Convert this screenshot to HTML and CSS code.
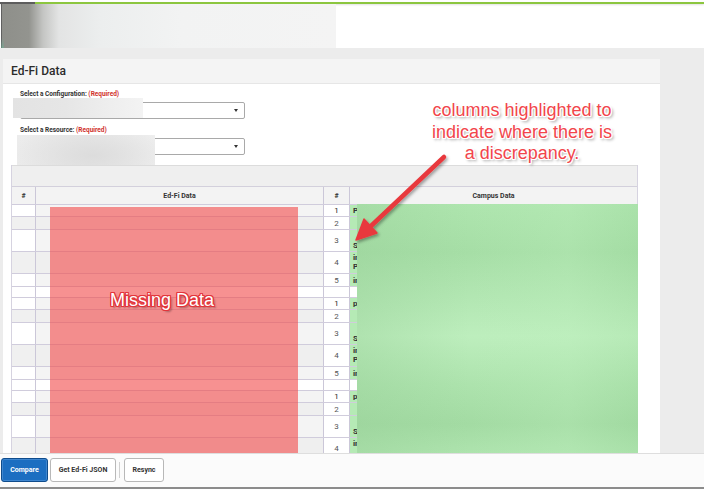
FILE: index.html
```html
<!DOCTYPE html>
<html lang="en">
<head>
<meta charset="utf-8">
<title>Ed-Fi Data</title>
<link rel="stylesheet" href="styles.css">
</head>
<body>
  <header class="app-header">
    <div class="topline"></div>
    <div class="brand"></div>
  </header>

  <main class="workspace">
    <section class="panel">
      <h1 class="panel-title">Ed-Fi Data</h1>
      <div class="panel-body">
        <div class="field">
          <div class="field-label">Select a Configuration: <span class="req">(Required)</span></div>
          <div class="select"><span class="caret"></span></div>
        </div>
        <div class="field">
          <div class="field-label">Select a Resource: <span class="req">(Required)</span></div>
          <div class="select"><span class="caret"></span></div>
        </div>
        <div class="smudge smudge-config"></div>
        <div class="smudge smudge-resource"></div>

        <div class="compare">
          <div class="toolbar"></div>
          <div class="row head">
            <div class="c c1">#</div>
            <div class="c c2">Ed-Fi Data</div>
            <div class="c c3">#</div>
            <div class="c c4">Campus Data</div>
          </div>

          <div class="row r1"><div class="c c1"></div><div class="c c2"></div><div class="c c3 n dark">1</div><div class="c c4 t">Program</div></div>
          <div class="row r2 alt"><div class="c c1"></div><div class="c c2"></div><div class="c c3 n">2</div><div class="c c4 t"></div></div>
          <div class="row r3"><div class="c c1"></div><div class="c c2"></div><div class="c c3 n">3</div><div class="c c4 t bottom">Schedule</div></div>
          <div class="row r4 alt"><div class="c c1"></div><div class="c c2"></div><div class="c c3 n">4</div><div class="c c4 t top">inactive<br>Program</div></div>
          <div class="row r5"><div class="c c1"></div><div class="c c2"></div><div class="c c3 n">5</div><div class="c c4 t">inactive</div></div>
          <div class="row sep"><div class="c c1"></div><div class="c c2"></div><div class="c c3"></div><div class="c c4"></div></div>

          <div class="row r1"><div class="c c1"></div><div class="c c2"></div><div class="c c3 n dark">1</div><div class="c c4 t">program</div></div>
          <div class="row r2 alt"><div class="c c1"></div><div class="c c2"></div><div class="c c3 n">2</div><div class="c c4 t"></div></div>
          <div class="row r3"><div class="c c1"></div><div class="c c2"></div><div class="c c3 n">3</div><div class="c c4 t bottom">Schedule</div></div>
          <div class="row r4 alt"><div class="c c1"></div><div class="c c2"></div><div class="c c3 n">4</div><div class="c c4 t top">inactive<br>Program</div></div>
          <div class="row r5"><div class="c c1"></div><div class="c c2"></div><div class="c c3 n">5</div><div class="c c4 t">inactive</div></div>
          <div class="row sep"><div class="c c1"></div><div class="c c2"></div><div class="c c3"></div><div class="c c4"></div></div>

          <div class="row r1"><div class="c c1"></div><div class="c c2"></div><div class="c c3 n dark">1</div><div class="c c4 t">program</div></div>
          <div class="row r2 alt"><div class="c c1"></div><div class="c c2"></div><div class="c c3 n">2</div><div class="c c4 t"></div></div>
          <div class="row r3"><div class="c c1"></div><div class="c c2"></div><div class="c c3 n">3</div><div class="c c4 t bottom">Schedule</div></div>
          <div class="row r4 alt"><div class="c c1"></div><div class="c c2"></div><div class="c c3 n">4</div><div class="c c4 t top">in</div></div>

          <div class="mask-missing"></div>
          <div class="mask-campus"></div>
        </div>
      </div>
    </section>
  </main>

  <footer class="actions">
    <button class="btn btn-primary">Compare</button>
    <button class="btn btn-json">Get Ed-Fi JSON</button>
    <span class="divider"></span>
    <button class="btn btn-resync">Resync</button>
  </footer>

  <div class="stamp">Missing Data</div>
  <div class="callout">columns highlighted to<br>indicate where there is<br>a discrepancy.</div>
  <svg class="pointer" width="704" height="490" viewBox="0 0 704 490" aria-hidden="true">
    <defs>
      <filter id="drop" x="-20%" y="-20%" width="140%" height="140%">
        <feDropShadow dx="1.5" dy="2" stdDeviation="1.5" flood-color="#000" flood-opacity="0.35"/>
      </filter>
    </defs>
    <g filter="url(#drop)" fill="#e8393d" stroke="#e8393d">
      <line x1="444" y1="157" x2="371" y2="226" stroke-width="4.5" stroke-linecap="round"/>
      <polygon points="356,240 377,233 364,219" stroke-width="1.5" stroke-linejoin="round"/>
    </g>
  </svg>
</body>
</html>
```

FILE: styles.css
```css
* { box-sizing: border-box; }

html, body { margin: 0; padding: 0; }

body {
  width: 704px;
  height: 490px;
  overflow: hidden;
  display: flex;
  flex-direction: column;
  position: relative;
  background: #fff;
  color: #333;
  font-family: Roboto, "Liberation Sans", Arial, sans-serif;
}

/* top application bar */
.app-header {
  height: 48px;
  flex: none;
  background: #fff;
}

.topline {
  height: 2px;
  margin-top: 2px;
  background: linear-gradient(to right, #5d5d5d 0 35px, #8cc63f 35px);
  box-shadow: 0 1px 2px rgba(0, 0, 0, 0.12);
}

.brand {
  width: 335px;
  height: 44px;
  margin-left: 1px;
  background:
    linear-gradient(to top, rgba(110, 175, 150, 0.55) 0, rgba(110, 175, 150, 0) 10px) left / 3px 100% no-repeat,
    linear-gradient(to right, #606060 0 1px, #8e8f8a 1px, #93948f 28px, #c4c5c3 42px, #e3e4e4 58px, #eceeee 100px, #f2f3f3 180px, #f4f4f4 100%);
}

/* work area */
.workspace {
  flex: 1;
  min-height: 0;
  overflow: hidden;
  background: #ececec;
  padding: 11px 0 0 3px;
}

.panel {
  width: 657px;
  min-height: 100%;
  background: #fff;
}

.panel-title {
  margin: 0;
  height: 25px;
  line-height: 25px;
  padding-left: 8px;
  background: #f4f4f4;
  border-bottom: 1px solid #e6e6e6;
  font-size: 12px;
  font-weight: 500;
  color: #2b2b2b;
}

.panel-body {
  position: relative;
  padding: 6px 22px 0 8px;
}

.field { padding-left: 9px; }
.field + .field { margin-top: 7px; }

.field-label {
  height: 9px;
  line-height: 9px;
  margin-bottom: 3px;
  font-size: 6.5px;
  font-weight: 700;
  color: #333;
  white-space: nowrap;
}

.req { color: #d0312d; }

.select {
  width: 225px;
  height: 17px;
  border: 1px solid #a9a9a9;
  border-radius: 2px;
  background: #fff;
  display: flex;
  align-items: center;
  justify-content: flex-end;
  padding-right: 6px;
}

.caret {
  width: 0;
  height: 0;
  border-left: 2.5px solid transparent;
  border-right: 2.5px solid transparent;
  border-top: 3.5px solid #333;
}

/* soft placeholder patches over the selected values */
.smudge { position: absolute; }

.smudge-config {
  left: 10px;
  top: 14px;
  width: 130px;
  height: 20px;
  background: linear-gradient(to right, #e3e3e3 0%, #e6e6e6 40%, #eeeeee 75%, #f3f3f3 100%);
}

.smudge-resource {
  left: 14px;
  top: 51px;
  width: 138px;
  height: 45px;
  background:
    radial-gradient(ellipse 60% 70% at 55% 45%, #dcdcdc 0%, rgba(220, 220, 220, 0) 100%),
    linear-gradient(to right, #ececec, #e8e8e8 50%, #efefef);
}

/* comparison grid */
.compare {
  position: relative;
  width: 627px;
  margin-top: 10px;
  border-left: 1px solid #d6d3e0;
  border-right: 1px solid #d6d3e0;
}

.toolbar {
  height: 22px;
  background: #efefef;
  border-top: 1px solid #dcdcdc;
  border-bottom: 1px solid #d3d0dc;
}

.row {
  display: flex;
  border-bottom: 1px solid #d0ccdc;
}

.c {
  height: 100%;
  border-right: 1px solid #cbc7d8;
  overflow: hidden;
}

.c1 { width: 24px; }
.c2 { width: 288px; background: #f4f4f4; }
.c3 { width: 26px; background: #fff; }
.c4 { width: 287px; border-right: 0; }

.row.head {
  height: 18px;
  background: #f3f3f3;
  font-size: 7px;
  font-weight: 700;
  color: #333;
}

.row.head .c {
  display: flex;
  align-items: center;
  justify-content: center;
  background: #f3f3f3;
}

.r1 { height: 12px; }
.r2 { height: 13px; }
.r3 { height: 22px; }
.r4 { height: 22px; }
.r5 { height: 13px; }
.sep { height: 11px; }

.alt .c1 { background: #f0f0f0; }
.alt .c2 { background: #efefef; }
.sep .c2, .sep .c4 { background: #fff; }

.n {
  display: flex;
  align-items: center;
  justify-content: center;
  font-size: 8px;
  color: #555;
}

.n.dark { color: #222; }

.t {
  background: #b5eab5;
  padding-left: 3px;
  font-size: 8px;
  font-weight: 700;
  line-height: 9px;
  color: #333;
  display: flex;
  align-items: center;
  white-space: nowrap;
}

.t.bottom { align-items: flex-end; padding-bottom: 1px; }
.t.top { align-items: flex-start; padding-top: 1px; }

/* highlight layers drawn over the columns */
.mask-missing {
  position: absolute;
  left: 38px;
  top: 42px;
  width: 248px;
  height: 400px;
  background: rgba(242, 72, 72, 0.6);
}

.mask-campus {
  position: absolute;
  left: 345px;
  top: 39px;
  width: 281px;
  height: 400px;
  background:
    linear-gradient(to right, rgba(150, 205, 150, 0.35), rgba(150, 205, 150, 0) 40%, rgba(190, 240, 190, 0.25) 75%, rgba(150, 210, 150, 0.15)),
    linear-gradient(to bottom, #aee5ae 0%, #a6dea6 12%, #b3e7b3 24%, #bdeebd 33%, #ade3ad 45%, #a3dba3 55%, #b6eab6 68%, #bceebc 74%, #a9e0a9 86%, #a0d7a0 100%);
}

/* bottom action bar */
.actions {
  flex: none;
  height: 36px;
  margin-bottom: 1px;
  border-top: 1px solid #dedede;
  border-bottom: 2px solid #8c8c8c;
  background: #fbfbfb;
  display: flex;
  align-items: flex-start;
  gap: 2px;
  padding: 4px 0 0 1px;
}

.btn {
  height: 24px;
  border: 1px solid #b8b8b8;
  border-radius: 3px;
  background: #fff;
  color: #333;
  font-family: Roboto, "Liberation Sans", Arial, sans-serif;
  font-size: 7px;
  font-weight: 700;
  padding: 0;
  display: flex;
  align-items: center;
  justify-content: center;
}

.btn-primary {
  width: 47px;
  background: #1c6ec1;
  border-color: #0f4c8c;
  color: #fff;
  box-shadow: inset 0 0 0 1px #3f86cf;
}

.btn-json { width: 66px; }
.btn-resync { width: 40px; }

.divider {
  width: 1px;
  height: 16px;
  margin: 4px 2px 0 1px;
  background: #d0d0d0;
}

/* notes drawn on top of the page */
.stamp {
  position: absolute;
  left: 110px;
  top: 290px;
  font-family: "Liberation Sans", Arial, sans-serif;
  font-size: 18px;
  line-height: 21px;
  color: #fff;
  text-shadow:
    1px 0 0 #e3343a, -1px 0 0 #e3343a, 0 1px 0 #e3343a, 0 -1px 0 #e3343a,
    1px 1px 0 #e3343a, -1px -1px 0 #e3343a, 1px -1px 0 #e3343a, -1px 1px 0 #e3343a,
    2px 2px 2px rgba(0, 0, 0, 0.35);
}

.callout {
  position: absolute;
  left: 430px;
  top: 100px;
  width: 184px;
  text-align: center;
  font-family: "Liberation Sans", Arial, sans-serif;
  font-size: 18px;
  line-height: 21.5px;
  color: #f2454b;
  white-space: nowrap;
  text-shadow:
    1px 0 0 #fff, -1px 0 0 #fff, 0 1px 0 #fff, 0 -1px 0 #fff,
    1px 1px 0 #fff, -1px -1px 0 #fff, 1px -1px 0 #fff, -1px 1px 0 #fff,
    2px 2px 3px rgba(0, 0, 0, 0.45);
}

.pointer {
  position: absolute;
  left: 0;
  top: 0;
  pointer-events: none;
}
```
